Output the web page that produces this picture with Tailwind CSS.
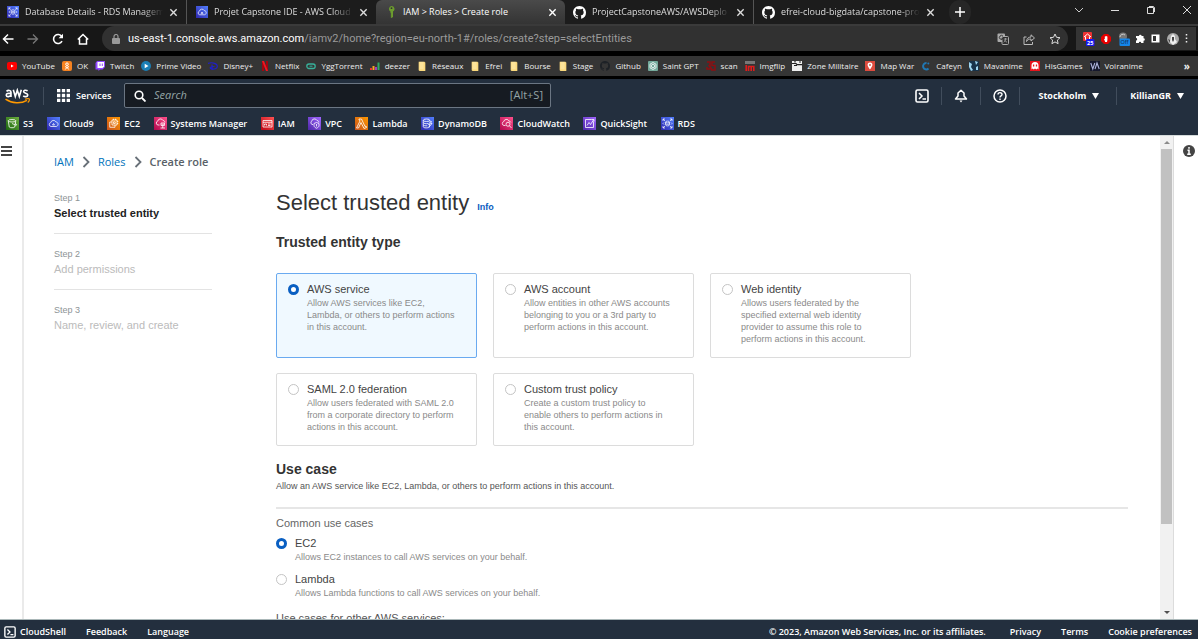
<!DOCTYPE html>
<html lang="en">
<head>
<meta charset="utf-8">
<meta name="viewport" content="width=device-width, initial-scale=1">
<title>IAM &gt; Roles &gt; Create role</title>
<script src="https://cdn.jsdelivr.net/npm/@tailwindcss/browser@4"></script>
</head>
<body class="flex h-screen flex-col overflow-hidden bg-white font-['Liberation_Sans',sans-serif]">

<svg class="absolute size-0" aria-hidden="true">
  <defs>
    <linearGradient id="gBlue" x1="0" y1="1" x2="1" y2="0"><stop stop-color="#2e27ad"/><stop offset="1" stop-color="#527fff"/></linearGradient>
    <linearGradient id="gOrange" x1="0" y1="1" x2="1" y2="0"><stop stop-color="#c8511b"/><stop offset="1" stop-color="#ff9900"/></linearGradient>
    <linearGradient id="gPink" x1="0" y1="1" x2="1" y2="0"><stop stop-color="#b0084d"/><stop offset="1" stop-color="#ff4f8b"/></linearGradient>
    <linearGradient id="gRed" x1="0" y1="1" x2="1" y2="0"><stop stop-color="#bd0816"/><stop offset="1" stop-color="#ff5252"/></linearGradient>
    <linearGradient id="gPurple" x1="0" y1="1" x2="1" y2="0"><stop stop-color="#4d27a8"/><stop offset="1" stop-color="#a166ff"/></linearGradient>
    <linearGradient id="gGreen" x1="0" y1="1" x2="1" y2="0"><stop stop-color="#1b660f"/><stop offset="1" stop-color="#6cae3e"/></linearGradient>
  </defs>
  <symbol id="rds" viewBox="0 0 26 26"><path fill="url(#gBlue)" d="M0 0h26v26H0z"/><g fill="none" stroke="#fff" stroke-width="1.4"><path d="M4 8V4h4M4 4l4 4M18 4h4v4M22 4l-4 4M4 18v4h4M4 22l4-4M22 18v4h-4M22 22l-4-4"/><ellipse cx="13" cy="10" rx="4" ry="1.8"/><path d="M9 10v6c0 2.4 8 2.4 8 0v-6M9 13c0 2.4 8 2.4 8 0M6 11l-2 2 2 2M20 11l2 2-2 2"/></g></symbol>
  <symbol id="cloud9" viewBox="0 0 26 26"><path fill="url(#gBlue)" d="M0 0h26v26H0z"/><path fill="none" stroke="#fff" stroke-width="1.5" d="M8 19a4 4 0 0 1-.5-7.8 5.5 5.5 0 0 1 10.3-1.4c3.200.7 5 2.600 4.200 5.700-.5 2.200-2 3.500-4 3.500zM11 16l2-3 2 3z"/></symbol>
  <symbol id="github" viewBox="0 0 16 16"><path fill-rule="evenodd" d="M8 0C3.580 0 0 3.580 0 8c0 3.540 2.290 6.530 5.470 7.590.4.07.55-.17.55-.38 0-.19-.01-.82-.01-1.490-2.010.37-2.530-.49-2.690-.94-.09-.23-.48-.94-.82-1.130-.28-.15-.68-.52-.01-.53.63-.01 1.080.58 1.230.82.72 1.210 1.870.87 2.330.66.07-.52.28-.87.51-1.070-1.780-.2-3.640-.89-3.640-3.950 0-.87.31-1.590.82-2.150-.08-.2-.36-1.020.08-2.120 0 0 .67-.21 2.200.82.64-.18 1.320-.27 2-.27s1.360.09 2 .27c1.530-1.040 2.200-.82 2.200-.82.44 1.100.16 1.920.08 2.120.51.56.82 1.270.82 2.150 0 3.070-1.870 3.750-3.650 3.950.29.25.54.73.54 1.480 0 1.070-.01 1.930-.01 2.200 0 .21.15.46.55.38A8.010 8.010 0 0 0 16 8c0-4.420-3.580-8-8-8z"/></symbol>
  <symbol id="x" viewBox="0 0 10 10"><path d="M1.500 1.500l7 7M8.500 1.500l-7 7" stroke="currentColor" stroke-width="1.500"/></symbol>
  <symbol id="folder" viewBox="0 0 10 12"><path fill="#fbd97c" d="M1 1h7l1 1v10H2l-1-1z"/><path fill="#fff0b8" d="M2 1h5v9H2z" opacity=".5"/></symbol>
  <symbol id="shell" viewBox="0 0 14 14"><rect x="1" y="1" width="12" height="12" rx="1.500" fill="none" stroke="#fff" stroke-width="1.600"/><path d="M4 4l3 3-3 3M7.500 10H11" fill="none" stroke="#fff" stroke-width="1.500"/></symbol>
  <symbol id="chev" viewBox="0 0 8 12"><path d="M1.500 1l5 5-5 5" fill="none" stroke="#687078" stroke-width="1.800"/></symbol>
</svg>

<!-- Browser tabs -->
<header class="shrink-0 bg-black font-['Open_Sans',sans-serif] text-[#dcdcdc]">
  <div class="flex h-6 items-stretch bg-[#1c1c1c] text-[9px] whitespace-nowrap">
    <div class="flex w-[187px] items-center gap-[6px] border-r border-[#555] pr-2 pl-[7px]">
      <svg class="size-3 shrink-0"><use href="#rds"/></svg>
      <span class="min-w-0 flex-1 mask-r-from-85%">Database Details - RDS Managem</span>
      <button aria-label="Close tab"><svg class="size-[9px]"><use href="#x"/></svg></button>
    </div>
    <div class="flex w-[189px] items-center gap-[6px] pr-2 pl-[9px]">
      <svg class="size-3 shrink-0"><use href="#cloud9"/></svg>
      <span class="min-w-0 flex-1 mask-r-from-85%">Projet Capstone IDE - AWS Cloud</span>
      <button aria-label="Close tab"><svg class="size-[9px]"><use href="#x"/></svg></button>
    </div>
    <div class="flex w-[189px] items-center gap-[6px] rounded-t-md bg-[#3b3b3b] bg-linear-to-b from-[#4a4a4a] to-[#343434] pr-2 pl-[10px] text-white">
      <svg class="h-3 w-[11px] shrink-0" viewBox="0 0 11 12"><path fill="#6c9c2e" d="M5.500 0a3 3 0 0 1 1.500 5.600V11l-1.500 1-1-1 .8-1-.8-1 .8-1-.8-1V5.600A3 3 0 0 1 5.500 0z"/><circle cx="5.500" cy="2.200" r=".9" fill="#333"/></svg>
      <span class="min-w-0 flex-1">IAM &gt; Roles &gt; Create role</span>
      <button aria-label="Close tab"><svg class="size-[9px]"><use href="#x"/></svg></button>
    </div>
    <div class="flex w-[189px] items-center gap-[6px] border-r border-[#555] pr-2 pl-2">
      <svg class="size-[13px] shrink-0 fill-white"><use href="#github"/></svg>
      <span class="min-w-0 flex-1 mask-r-from-85%">ProjectCapstoneAWS/AWSDeplo</span>
      <button aria-label="Close tab"><svg class="size-[9px]"><use href="#x"/></svg></button>
    </div>
    <div class="flex w-[189px] items-center gap-[6px] pr-2 pl-2">
      <svg class="size-[13px] shrink-0 fill-white"><use href="#github"/></svg>
      <span class="min-w-0 flex-1 mask-r-from-85%">efrei-cloud-bigdata/capstone-pro</span>
      <button aria-label="Close tab"><svg class="size-[9px]"><use href="#x"/></svg></button>
    </div>
    <button class="ml-[6px] flex w-[22px] items-center justify-center rounded-full bg-[#262626]" aria-label="New tab"><svg class="size-[10px]" viewBox="0 0 10 10"><path d="M5 0v10M0 5h10" stroke="#fff" stroke-width="1.500"/></svg></button>
    <div class="ml-auto flex items-center gap-[26px] pr-[6px] pb-1">
      <button aria-label="Search tabs"><svg class="size-[10px]" viewBox="0 0 10 10"><path d="M1 3l4 4 4-4" fill="none" stroke="#ccc"/></svg></button>
      <button aria-label="Minimize"><svg class="size-[10px]" viewBox="0 0 10 10"><path d="M1 5.500h8" stroke="#ddd"/></svg></button>
      <button aria-label="Restore"><svg class="size-[10px]" viewBox="0 0 10 10"><path d="M1.500 2.500h6v6h-6zM3 1.500h4.500l1 1V7" fill="none" stroke="#ddd"/></svg></button>
      <button aria-label="Close"><svg class="size-[10px]" viewBox="0 0 10 10"><path d="M1 1l8 8M9 1L1 9" stroke="#ddd"/></svg></button>
    </div>
  </div>

  <!-- Address bar -->
  <div class="flex h-[27px] items-center border-t-2 border-[#3a3a3a] bg-[#171717] pr-[2px] pl-[2px]">
    <div class="flex w-[100px] items-center gap-[13px]">
      <button aria-label="Back"><svg class="size-3" viewBox="0 0 12 12"><path d="M11.500 6H1.500M6 1.500L1.500 6 6 10.500" fill="none" stroke="#fff" stroke-width="1.500"/></svg></button>
      <button aria-label="Forward"><svg class="size-3" viewBox="0 0 12 12"><path d="M.5 6h10M6 1.500L10.500 6 6 10.500" fill="none" stroke="#777" stroke-width="1.300"/></svg></button>
      <button aria-label="Reload"><svg class="size-3" viewBox="0 0 12 12"><path d="M10 8.200A4.500 4.500 0 1 1 9.800 3.500" fill="none" stroke="#fff" stroke-width="1.600"/><path d="M11 .8v4.400H6.600z" fill="#fff"/></svg></button>
      <button aria-label="Home"><svg class="size-3" viewBox="0 0 12 12"><path d="M.8 6.500L6 1.500l5.200 5M2.500 5.500V11h7V5.500" fill="none" stroke="#fff" stroke-width="1.500"/></svg></button>
    </div>
    <div class="flex h-full flex-1 items-center rounded-full bg-[#313131] pr-[7px] pl-[10px]">
      <svg class="mr-2 h-[10px] w-2" viewBox="0 0 8 10"><rect y="4" width="8" height="6" rx="1" fill="#9a9a9a"/><path d="M2 4V2.500a2 2 0 0 1 4 0V4" fill="none" stroke="#9a9a9a" stroke-width="1.200"/></svg>
      <span class="flex-1 font-[Roboto,sans-serif] text-[11px] leading-4 whitespace-nowrap text-[#9a9a9a]"><span class="text-white">us-east-1.console.aws.amazon.com</span>/iamv2/home?region=eu-north-1#/roles/create?step=selectEntities</span>
      <div class="flex items-center gap-[14px]">
        <button aria-label="Translate"><svg class="size-3" viewBox="0 0 12 12"><rect x=".5" y=".5" width="7.500" height="8.500" rx="1" fill="#aaa"/><rect x="5" y="3.500" width="6.500" height="8" rx="1" fill="#2f2f2f" stroke="#aaa"/><path d="M6 3.200a2 2 0 1 0 .2 2.200H4.500" fill="none" stroke="#333"/><path d="M6.800 6h3.500M8.500 5v1c0 1.500-.8 2.500-1.800 3.300M7.500 7.300l2.500 2" fill="none" stroke="#aaa" stroke-width=".8"/></svg></button>
        <button aria-label="Share"><svg class="size-3" viewBox="0 0 12 12"><path d="M3.500 4H1v7.500h8.500V9M3.500 8.500C3.800 5.500 5.500 4 8 4V1.800L11.500 5 8 8V6C6 6 4.600 6.800 3.500 8.500z" fill="none" stroke="#bbb"/></svg></button>
        <button aria-label="Bookmark"><svg class="size-3" viewBox="0 0 12 12"><path d="M6 1l1.500 3.300 3.500.4-2.600 2.400.7 3.600L6 8.900l-3.100 1.800.7-3.600L1 4.700l3.500-.4z" fill="none" stroke="#ddd"/></svg></button>
      </div>
    </div>
    <div class="ml-2 flex h-[23px] w-[120px] items-center justify-between bg-[#343434] pr-2 pl-[6px]">
      <svg class="h-[14px] w-[13px]" viewBox="0 0 13 14"><rect x="1" width="9" height="9" rx="1" fill="#e33"/><path d="M2 5l3.500-3L9 5M3.500 4.500v3h4v-3" stroke="#fff" fill="none"/><rect x="4" y="7" width="8.500" height="7" rx="1" fill="#1717f0"/><text x="5" y="12.500" font-size="5.500" font-weight="700" fill="#fff">25</text></svg>
      <svg class="size-[10px]" viewBox="0 0 10 10"><path fill="#e60000" d="M3 0h4l3 3v4l-3 3H3L0 7V3z"/><path fill="#fff" d="M3 5h.8V2.500h.8V2h1v.5h.8V6L6 8H4.200z"/></svg>
      <svg class="h-[14px] w-3" viewBox="0 0 12 14"><circle cx="5" cy="4.500" r="4" fill="#777"/><path d="M2 5a3 3 0 0 1 5-2" stroke="#ccc" fill="none"/><rect x="1.500" y="6.500" width="10.500" height="7.500" rx="1" fill="#1585e8"/><text x="2.600" y="12.300" font-size="5.500" fill="#102040">Off</text></svg>
      <svg class="size-[9px]" viewBox="0 0 9 9"><path fill="#fff" d="M0 2h3a1.300 1.300 0 1 1 2.600 0H7.500v2.200a1.300 1.300 0 1 1 0 2.600V9H5.200a1.200 1.200 0 0 0-2.400 0H0V6.500a1.200 1.200 0 0 0 0-2.400z"/></svg>
      <svg class="size-[9px]" viewBox="0 0 9 9"><path fill="#fff" fill-rule="evenodd" d="M.5.500h8v8h-8zM2 2v5h3V2z"/></svg>
      <svg class="size-3" viewBox="0 0 12 12"><circle cx="6" cy="6" r="6" fill="#aaa"/><path fill="#eee" d="M4 3l2-2 2 2v3l2 3-4 3-3-3z"/><path fill="#444" d="M5 4h2v3l-1 2-1-2zM1 6l2 1v3z"/></svg>
      <svg class="h-[9px] w-[3px]" viewBox="0 0 3 9"><path stroke="#eee" stroke-width="1.500" stroke-dasharray="1.500 2" d="M1.500 0v9"/></svg>
    </div>
  </div>

  <!-- Bookmarks -->
  <nav class="mt-[5px] mb-[3px] flex h-5 items-center justify-between bg-[#353535] pr-2 pl-[7px] text-[8px] whitespace-nowrap text-[#eee]">
    <a href="#" class="flex items-center gap-[5px]"><svg class="size-[10px]" viewBox="0 0 10 10"><rect y="1" width="10" height="8" rx="2" fill="#f00"/><path d="M4 3.500v3L6.700 5z" fill="#fff"/></svg>YouTube</a>
    <a href="#" class="flex items-center gap-[5px]"><svg class="size-[10px]" viewBox="0 0 10 10"><rect width="10" height="10" rx="2" fill="#f58220"/><circle cx="5" cy="3.200" r="1.300" fill="none" stroke="#fff"/><path d="M3 5.500c1.300 1 2.700 1 4 0M5 6.200L3.300 8.500M5 6.200l1.700 2.300" stroke="#fff" fill="none"/></svg>OK</a>
    <a href="#" class="flex items-center gap-[5px]"><svg class="size-[10px]" viewBox="0 0 10 10"><path fill="#9146ff" d="M2 0h8v6L7.500 8.500H5L3.500 10V8.500H.5V2z"/><path fill="#fff" d="M2.500 1H9v4.500L7.500 7H2.500z"/><path stroke="#9146ff" d="M5 2.500V5M7.300 2.500V5"/></svg>Twitch</a>
    <a href="#" class="flex items-center gap-[5px]"><svg class="size-[10px]" viewBox="0 0 10 10"><circle cx="5" cy="5" r="5" fill="#1b7fb5"/><path d="M3.700 2.700v4.600L7.500 5z" fill="#fff"/></svg>Prime Video</a>
    <a href="#" class="flex items-center gap-[5px]"><svg class="size-[10px]" viewBox="0 0 10 10"><path d="M0 2.500C3 1 9 2 9.300 5 9.500 8 6 8.500 3.500 8 1 7 2 5.500 6.500 5.500M4 3.500V9" fill="none" stroke="#2020c8" stroke-width="1.200"/></svg>Disney+</a>
    <a href="#" class="flex items-center gap-[5px]"><svg class="size-[10px]" viewBox="0 0 10 10"><path fill="#a00610" d="M2 0h2v10H2zM6 0h2v10H6z"/><path fill="#f01520" d="M2 0h2l4 10H6z"/></svg>Netflix</a>
    <a href="#" class="flex items-center gap-[5px]"><svg class="size-[10px]" viewBox="0 0 10 10"><rect x=".8" y="3" width="8.400" height="4.500" rx="2.200" fill="none" stroke="#38b09a" stroke-width="1.300"/><path d="M3.500 5.200h3" stroke="#38b09a"/></svg>YggTorrent</a>
    <a href="#" class="flex items-center gap-[5px]"><svg class="size-[10px]" viewBox="0 0 10 10"><path fill="#e33" d="M0 7h2v2H0z"/><path fill="#f5a623" d="M2.500 5h2v4h-2z"/><path fill="#a33bbf" d="M5 6h2v3H5z"/><path fill="#2fa866" d="M7.500 1.500h2V9h-2z"/></svg>deezer</a>
    <a href="#" class="flex items-center gap-[5px]"><svg class="size-[10px]"><use href="#folder"/></svg>Réseaux</a>
    <a href="#" class="flex items-center gap-[5px]"><svg class="size-[10px]"><use href="#folder"/></svg>Efrei</a>
    <a href="#" class="flex items-center gap-[5px]"><svg class="size-[10px]"><use href="#folder"/></svg>Bourse</a>
    <a href="#" class="flex items-center gap-[5px]"><svg class="size-[10px]"><use href="#folder"/></svg>Stage</a>
    <a href="#" class="flex items-center gap-[5px]"><svg class="size-[10px] fill-[#1d2126]"><use href="#github"/></svg>Github</a>
    <a href="#" class="flex items-center gap-[5px]"><svg class="size-[10px]" viewBox="0 0 10 10"><rect width="10" height="10" rx="1" fill="#74aa9c"/><g fill="none" stroke="#fff" stroke-width=".8"><path d="M5 1.500l3 1.700v3.600L5 8.500 2 6.800V3.200zM5 3.200l1.600.9v1.900L5 6.800l-1.600-.8V4.100z"/></g></svg>Saint GPT</a>
    <a href="#" class="flex items-center gap-[5px]"><svg class="size-[10px]" viewBox="0 0 10 10"><path d="M1 1h3v7H1V6M9 1H6v3.500h3V9H5M2.500 4l4 5" fill="none" stroke="#8c0f12" stroke-width="1.500"/></svg>scan</a>
    <a href="#" class="flex items-center gap-[5px]"><svg class="size-[10px]" viewBox="0 0 10 10"><path fill="#777" d="M0 0h10v3H0z"/><path d="M1.200 4v6M3.500 10V5.500h5.300V10M6.200 5.500V10" stroke="#e01b1b" stroke-width="1.600" fill="none"/></svg>Imgflip</a>
    <a href="#" class="flex items-center gap-[5px]"><svg class="size-[10px]" viewBox="0 0 10 10"><path fill="#eee" d="M0 0h10v10H0z"/><path d="M0 2.500h4l1 1.200h5M2 4.500h3M3 0v1.500M7 1h2" stroke="#222" stroke-width="1.200" fill="none"/></svg>Zone Militaire</a>
    <a href="#" class="flex items-center gap-[5px]"><svg class="size-[10px]" viewBox="0 0 10 10"><path fill="#dd4b3e" d="M0 0h10v10H0z"/><path fill="#fff" d="M5 1.500A2.400 2.400 0 0 1 7.400 4C7.400 5.500 5 8.500 5 8.500S2.600 5.500 2.600 4A2.400 2.400 0 0 1 5 1.500z"/><circle cx="5" cy="4" r=".9" fill="#dd4b3e"/></svg>Map War</a>
    <a href="#" class="flex items-center gap-[5px]"><svg class="size-[10px]" viewBox="0 0 10 10"><path d="M7.500 7.500A3.200 3.200 0 1 1 5.500 2" fill="none" stroke="#2078b4" stroke-width="2"/><circle cx="7.300" cy="2.500" r="1" fill="#2078b4"/></svg>Cafeyn</a>
    <a href="#" class="flex items-center gap-[5px]"><svg class="size-[10px]" viewBox="0 0 10 10"><path fill="#17324a" d="M0 0h10v10H0z"/><path fill="#9ed4ee" d="M0 1l3 2-1 3 2 3-2 1-2-4zM6 0l3 1-2 3zM7 6l2-1v4H7z"/></svg>Mavanime</a>
    <a href="#" class="flex items-center gap-[5px]"><svg class="size-[10px]" viewBox="0 0 10 10"><path fill="#e8141c" d="M0 0h10v10H0z"/><path fill="#fff" d="M1.500 8.500V4.500a3.500 3.500 0 0 1 7 0v4l-1-1-1.200 1L5 7.500l-1.200 1-1.200-1z"/><path stroke="#e8141c" stroke-width="1.300" d="M3.600 3.500v2M6.500 3.500v2"/></svg>HisGames</a>
    <a href="#" class="flex items-center gap-[5px]"><svg class="size-[10px]" viewBox="0 0 10 10"><path fill="#15182c" d="M0 0h10v10H0z"/><path d="M.8 2l2 6 2-6M5 8l2-6 2.200 6" fill="none" stroke="#aeb4dd" stroke-width="1.100"/></svg>Voiranime</a>
    <button class="ml-[34px] text-[10px] font-bold" aria-label="More bookmarks">»</button>
  </nav>
</header>

<!-- AWS navigation -->
<div class="shrink-0 bg-[#232f3e] font-['Open_Sans',sans-serif] text-[9px] font-bold whitespace-nowrap text-white">
  <div class="flex h-[33px] items-center pr-[14px] pl-[5px]">
    <a href="#" aria-label="AWS home"><svg class="h-4 w-[25px]" viewBox="0 0 25 16"><g fill="none" stroke="#fff" stroke-width="1.600"><path d="M1.500 3.300C3 2 6 2 6 4.300V9M6 5.600C3.500 5 1 5.600 1.300 7.300 1.500 9.200 5 9 6 6.800M8.300 1.800L10.300 8.500 12.300 2.200 14.300 8.500 16.300 1.800M22.600 2.800C20.500 1.700 18.500 2.300 18.700 3.800 19 5.500 22.800 4.800 22.800 7 22.700 9 19.700 9 18.200 7.800"/></g><path d="M.5 11.200c6.500 4.500 15.500 4.700 21.500 1.200" fill="none" stroke="#ff9900" stroke-width="1.500"/><path d="M20 11.200c2-.7 4.200-.6 4.300-.2.200.8-.4 2.500-1.600 3.500" fill="none" stroke="#ff9900" stroke-width="1.200"/></svg></a>
    <div class="mx-[13px] h-[18px] w-px bg-[#414d5c]"></div>
    <button class="flex w-[55px] items-center gap-[6px] font-semibold"><svg class="size-[13px]" viewBox="0 0 14 14"><path fill="#fff" d="M0 0h3.600v3.600H0zM5.200 0h3.600v3.600H5.200zM10.400 0H14v3.600h-3.600zM0 5.200h3.600v3.600H0zM5.200 5.200h3.600v3.600H5.200zM10.400 5.200H14v3.600h-3.600zM0 10.400h3.600V14H0zM5.200 10.400h3.600V14H5.200zM10.400 10.400H14V14h-3.600z"/></svg>Services</button>
    <label class="ml-3 flex h-[25px] w-[427px] items-center gap-2 rounded-xs border border-[#6b7683] bg-[#161b22] pr-[7px] pl-[9px] text-[11px] font-normal text-[#95a5a6]">
      <svg class="size-3" viewBox="0 0 12 12"><circle cx="5" cy="5" r="3.800" fill="none" stroke="#fff" stroke-width="1.600"/><path d="M8 8l3.500 3.500" stroke="#fff" stroke-width="1.800"/></svg>
      <input type="text" aria-label="Search" placeholder="Search" class="min-w-0 flex-1 bg-transparent outline-none placeholder:text-[#95a5a6] placeholder:italic">
      <span>[Alt+S]</span>
    </label>
    <div class="ml-auto flex items-center">
      <button aria-label="CloudShell"><svg class="size-[14px]"><use href="#shell"/></svg></button>
      <div class="mx-3 h-[18px] w-px bg-[#414d5c]"></div>
      <button aria-label="Notifications"><svg class="size-[14px]" viewBox="0 0 14 14"><path d="M7 1.200L10 4v3l2.500 3h-11L4 7V4z" fill="none" stroke="#fff" stroke-width="1.500" stroke-linejoin="round"/><path d="M5.500 11.500h3L7 13.500z" fill="#fff"/></svg></button>
      <div class="mx-3 h-[18px] w-px bg-[#414d5c]"></div>
      <button aria-label="Help"><svg class="size-[14px]" viewBox="0 0 14 14"><circle cx="7" cy="7" r="6" fill="none" stroke="#fff" stroke-width="1.500"/><path d="M5 5.600C5 3 9 3 9 5.500 9 7 7 6.800 7 8.500M7 9.500V11" fill="none" stroke="#fff" stroke-width="1.400"/></svg></button>
      <div class="mx-3 h-[18px] w-px bg-[#414d5c]"></div>
      <button class="ml-[7px] flex items-center gap-[6px]">Stockholm<svg class="h-[6px] w-[7px]" viewBox="0 0 7 6"><path fill="#fff" d="M0 0h7L3.500 6z"/></svg></button>
      <div class="ml-[17px] h-[18px] w-px bg-[#414d5c]"></div>
      <button class="ml-[13px] flex items-center gap-[6px]">KillianGR<svg class="h-[6px] w-[7px]" viewBox="0 0 7 6"><path fill="#fff" d="M0 0h7L3.500 6z"/></svg></button>
    </div>
  </div>
  <nav class="flex h-[23px] w-[695px] items-center justify-between pl-[6px] font-semibold">
    <a href="#" class="flex items-center gap-1"><svg class="size-[13px]" viewBox="0 0 26 26"><path fill="url(#gGreen)" d="M0 0h26v26H0z"/><g fill="none" stroke="#fff" stroke-width="1.600"><ellipse cx="12" cy="7.500" rx="7.500" ry="2.500"/><path d="M4.500 7.500L6.500 20c1 2 10 2 11 0l2-12.500M12 13l8 3.500c2.500 0 1-2.500-1.500-4"/></g></svg>S3</a>
    <a href="#" class="flex items-center gap-1"><svg class="size-[13px]"><use href="#cloud9"/></svg>Cloud9</a>
    <a href="#" class="flex items-center gap-1"><svg class="size-[13px]" viewBox="0 0 26 26"><path fill="url(#gOrange)" d="M0 0h26v26H0z"/><path fill="none" stroke="#fff" stroke-width="1.600" d="M10 6h10v10H10zM16 16v4.500H5.500V10H10M13 6V3.500M17 6V3.500M20 9h2.500M20 13h2.500M13 9.500h3.500V13H13z"/></svg>EC2</a>
    <a href="#" class="flex items-center gap-1"><svg class="size-[13px]" viewBox="0 0 26 26"><path fill="url(#gPink)" d="M0 0h26v26H0z"/><path fill="none" stroke="#fff" stroke-width="1.600" d="M11 16H8a4 4 0 0 1-.5-7.800 5.500 5.500 0 0 1 10.300-1.400c3 .5 4 2.200 4 4.200M14 12h7v5h-7zM17.500 17v5M13 22h9M15 14.500h5"/></svg>Systems Manager</a>
    <a href="#" class="flex items-center gap-1"><svg class="size-[13px]" viewBox="0 0 26 26"><path fill="url(#gRed)" d="M0 0h26v26H0z"/><path fill="none" stroke="#fff" stroke-width="1.600" d="M4 7h18v13H4zM4 10.500h18M7 17v-3h4v3M14 14h5M14 17h5"/></svg>IAM</a>
    <a href="#" class="flex items-center gap-1"><svg class="size-[13px]" viewBox="0 0 26 26"><path fill="url(#gPurple)" d="M0 0h26v26H0z"/><path fill="none" stroke="#fff" stroke-width="1.600" d="M10 15H8a4 4 0 0 1-.5-6.800A5.500 5.500 0 0 1 17.800 6.800c3 .5 4 2 4 4.200M17 11l5 2v4c0 3-3 4.500-5 5.500-2-1-5-2.500-5-5.500v-4zM17 14v5"/></svg>VPC</a>
    <a href="#" class="flex items-center gap-1"><svg class="size-[13px]" viewBox="0 0 26 26"><path fill="url(#gOrange)" d="M0 0h26v26H0z"/><path fill="none" stroke="#fff" stroke-width="1.600" d="M8 4h5l7 15 2-1 1 3-5 2-6-12-5 11H3l7-14-1-2H8z"/></svg>Lambda</a>
    <a href="#" class="flex items-center gap-1"><svg class="size-[13px]" viewBox="0 0 26 26"><path fill="url(#gBlue)" d="M0 0h26v26H0z"/><g fill="none" stroke="#fff" stroke-width="1.600"><ellipse cx="11" cy="6.500" rx="6.500" ry="2.500"/><path d="M4.500 6.500v13c0 3 11 3 13 0M17.500 6.500V9M4.500 11c0 2 6 3 10 2M4.500 15.500c0 2 5 2.500 8 2M19 9l-4 6h3l-2 5 6-7h-3l2-4z"/></g></svg>DynamoDB</a>
    <a href="#" class="flex items-center gap-1"><svg class="size-[13px]" viewBox="0 0 26 26"><path fill="url(#gPink)" d="M0 0h26v26H0z"/><g fill="none" stroke="#fff" stroke-width="1.600"><path d="M11 17H8a4 4 0 0 1-.5-7.800 5.500 5.500 0 0 1 10.300-1.400c2 .3 3.500 1.500 4 3.200"/><circle cx="16" cy="14.500" r="4"/><path d="M19 17.500l4 4.500"/></g></svg>CloudWatch</a>
    <a href="#" class="flex items-center gap-1"><svg class="size-[13px]" viewBox="0 0 26 26"><path fill="url(#gPurple)" d="M0 0h26v26H0z"/><path fill="none" stroke="#fff" stroke-width="1.600" d="M17 5H5v16h16V9M8 17l4-6 3 4 6-9M17 5h5v4"/></svg>QuickSight</a>
    <a href="#" class="flex items-center gap-1"><svg class="size-[13px]"><use href="#rds"/></svg>RDS</a>
  </nav>
</div>

<!-- Console body -->
<div class="flex min-h-0 flex-1 border-t border-[#d5dbdb]">
  <aside class="flex w-6 shrink-0 flex-col items-start border-r-2 border-[#eaeaea] pt-[10px] pl-px">
    <button aria-label="Open navigation"><svg class="h-[10px] w-[11px]" viewBox="0 0 11 10"><path d="M0 1h11M0 5h11M0 9h11" stroke="#444" stroke-width="1.800"/></svg></button>
  </aside>

  <main class="min-w-0 flex-1 overflow-hidden pt-[18px] pr-8 pl-[30px]">
    <nav aria-label="Breadcrumb" class="flex items-center gap-2 font-['Open_Sans',sans-serif] text-[11px] leading-4">
      <a href="#" class="text-[#0073bb]">IAM</a>
      <svg class="h-3 w-2"><use href="#chev"/></svg>
      <a href="#" class="text-[#0073bb]">Roles</a>
      <svg class="h-3 w-2"><use href="#chev"/></svg>
      <span class="font-semibold text-[#596168]">Create role</span>
    </nav>

    <div class="mt-[22px] flex gap-16">
      <ol class="w-[158px] shrink-0 text-[11px] leading-4">
        <li class="border-b border-[#e3e3e3] pb-3"><p class="text-[9px] leading-3 text-[#8d9496]">Step 1</p><p class="mt-px font-bold text-[#222]">Select trusted entity</p></li>
        <li class="border-b border-[#e3e3e3] pt-[14px] pb-3"><p class="text-[9px] leading-3 text-[#8d9496]">Step 2</p><p class="mt-px text-[#bbb]">Add permissions</p></li>
        <li class="pt-[14px]"><p class="text-[9px] leading-3 text-[#8d9496]">Step 3</p><p class="mt-px text-[#bbb]">Name, review, and create</p></li>
      </ol>

      <section class="min-w-0 flex-1">
        <div class="flex items-baseline gap-2"><h1 class="text-[22px] leading-[22px] text-[#333]">Select trusted entity</h1><a href="#" class="text-[9px] leading-3 font-bold text-[#0a5cc0]">Info</a></div>
        <h2 class="mt-[19px] text-[14px] leading-[18px] font-bold text-[#333]">Trusted entity type</h2>

        <div class="mt-[22px] grid grid-cols-4 gap-x-4 gap-y-[15px] text-[11px] leading-[14px] text-[#444]">
          <label class="flex gap-2 rounded-xs border border-[#6aaaf0] bg-[#f0f9ff] py-2 pr-2 pl-[11px]">
            <input type="radio" name="entity" checked class="mt-[2px] size-[11px] shrink-0 appearance-none rounded-full border border-[#c4c4c4] bg-white checked:border-[3px] checked:border-[#0a5fc2]">
            <span>AWS service<span class="mt-px block text-[9px] leading-3 text-[#8a8a8a]">Allow AWS services like EC2,<br>Lambda, or others to perform actions<br>in this account.</span></span>
          </label>
          <label class="flex gap-2 rounded-xs border border-[#dcdcdc] py-2 pr-2 pl-[11px]">
            <input type="radio" name="entity" class="mt-[2px] size-[11px] shrink-0 appearance-none rounded-full border border-[#c4c4c4] bg-white checked:border-[3px] checked:border-[#0a5fc2]">
            <span>AWS account<span class="mt-px block text-[9px] leading-3 text-[#8a8a8a]">Allow entities in other AWS accounts<br>belonging to you or a 3rd party to<br>perform actions in this account.</span></span>
          </label>
          <label class="flex gap-2 rounded-xs border border-[#dcdcdc] pt-2 pr-2 pb-3 pl-[11px]">
            <input type="radio" name="entity" class="mt-[2px] size-[11px] shrink-0 appearance-none rounded-full border border-[#c4c4c4] bg-white checked:border-[3px] checked:border-[#0a5fc2]">
            <span>Web identity<span class="mt-px block text-[9px] leading-3 text-[#8a8a8a]">Allows users federated by the<br>specified external web identity<br>provider to assume this role to<br>perform actions in this account.</span></span>
          </label>
          <label class="col-start-1 flex gap-2 rounded-xs border border-[#dcdcdc] pt-2 pr-2 pb-3 pl-[11px]">
            <input type="radio" name="entity" class="mt-[2px] size-[11px] shrink-0 appearance-none rounded-full border border-[#c4c4c4] bg-white checked:border-[3px] checked:border-[#0a5fc2]">
            <span>SAML 2.0 federation<span class="mt-px block text-[9px] leading-3 text-[#8a8a8a]">Allow users federated with SAML 2.0<br>from a corporate directory to perform<br>actions in this account.</span></span>
          </label>
          <label class="flex gap-2 rounded-xs border border-[#dcdcdc] pt-2 pr-2 pb-3 pl-[11px]">
            <input type="radio" name="entity" class="mt-[2px] size-[11px] shrink-0 appearance-none rounded-full border border-[#c4c4c4] bg-white checked:border-[3px] checked:border-[#0a5fc2]">
            <span>Custom trust policy<span class="mt-px block text-[9px] leading-3 text-[#8a8a8a]">Create a custom trust policy to<br>enable others to perform actions in<br>this account.</span></span>
          </label>
        </div>

        <h2 class="mt-[14px] text-[14px] leading-[18px] font-bold text-[#333]">Use case</h2>
        <p class="mt-[2px] text-[9px] leading-3 text-[#555]">Allow an AWS service like EC2, Lambda, or others to perform actions in this account.</p>
        <hr class="mt-[15px] border-t-2 border-[#e6e6e6]">
        <fieldset class="mt-[7px] text-[11px] leading-[14px] text-[#444]">
          <legend class="text-[#666]">Common use cases</legend>
          <label class="mt-[6px] flex gap-2">
            <input type="radio" name="usecase" checked class="mt-[2px] size-[11px] shrink-0 appearance-none rounded-full border border-[#c4c4c4] bg-white checked:border-[3px] checked:border-[#0a5fc2]">
            <span>EC2<span class="mt-px block text-[9px] leading-3 text-[#8a8a8a]">Allows EC2 instances to call AWS services on your behalf.</span></span>
          </label>
          <label class="mt-[9px] flex gap-2">
            <input type="radio" name="usecase" class="mt-[2px] size-[11px] shrink-0 appearance-none rounded-full border border-[#c4c4c4] bg-white checked:border-[3px] checked:border-[#0a5fc2]">
            <span>Lambda<span class="mt-px block text-[9px] leading-3 text-[#8a8a8a]">Allows Lambda functions to call AWS services on your behalf.</span></span>
          </label>
        </fieldset>
        <p class="mt-3 text-[11px] leading-[14px] text-[#555]">Use cases for other AWS services:</p>
      </section>
    </div>
  </main>

  <!-- Scroll bar -->
  <div class="flex w-[14px] shrink-0 flex-col items-center border-r border-[#dcdcdc] bg-[#f1f1f1]">
    <svg class="my-[5px] h-[3px] w-[6px] shrink-0" viewBox="0 0 6 3"><path fill="#8a8a8a" d="M0 3h6L3 0z"/></svg>
    <div class="w-[11px] flex-[374] bg-[#c1c1c1]"></div>
    <div class="flex-[82]"></div>
    <svg class="my-[5px] h-[3px] w-[6px] shrink-0" viewBox="0 0 6 3"><path fill="#505050" d="M0 0h6L3 3z"/></svg>
  </div>
  <aside class="flex w-6 shrink-0 flex-col items-end pt-[9px] pr-[3px]">
    <button aria-label="Info"><svg class="size-3" viewBox="0 0 12 12"><circle cx="6" cy="6" r="6" fill="#444"/><path d="M6 2v1.800M4.500 5.300H6V9M4.200 9.200h3.600" stroke="#fff" stroke-width="1.500" fill="none"/></svg></button>
  </aside>
</div>

<footer class="flex h-5 shrink-0 items-center border-t border-[#aab7b8] bg-[#232f3e] pt-1 pr-[6px] pl-[4px] font-['Open_Sans',sans-serif] text-[9px] leading-3 font-semibold whitespace-nowrap text-white">
  <button class="flex items-center gap-1"><svg class="size-3"><use href="#shell"/></svg>CloudShell</button>
  <a href="#" class="ml-5">Feedback</a>
  <button class="ml-5">Language</button>
  <span class="ml-auto">© 2023, Amazon Web Services, Inc. or its affiliates.</span>
  <a href="#" class="ml-6">Privacy</a>
  <a href="#" class="ml-5">Terms</a>
  <a href="#" class="ml-5">Cookie preferences</a>
</footer>
</body>
</html>
